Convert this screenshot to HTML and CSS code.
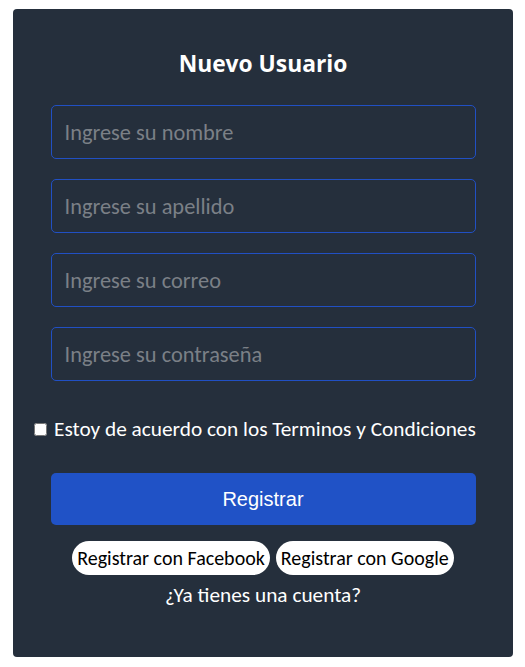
FILE: index.html
```html
<!DOCTYPE html>
<html lang="es">
<head>
<meta charset="utf-8">
<title>Nuevo Usuario</title>
<link rel="stylesheet" href="styles.css">
</head>
<body>
<form class="card">
  <h1 class="title">Nuevo Usuario</h1>
  <div class="fields">
    <input class="field" type="text" placeholder="Ingrese su nombre">
    <input class="field" type="text" placeholder="Ingrese su apellido">
    <input class="field" type="email" placeholder="Ingrese su correo">
    <input class="field" type="password" placeholder="Ingrese su contraseña">
  </div>
  <label class="terms"><input class="check" type="checkbox"><span>Estoy de acuerdo con los Terminos y Condiciones</span></label>
  <button class="submit" type="button">Registrar</button>
  <div class="social">
    <button class="pill" type="button">Registrar con Facebook</button>
    <button class="pill" type="button">Registrar con Google</button>
  </div>
  <p class="login">¿Ya tienes una cuenta?</p>
</form>
</body>
</html>
```
FILE: styles.css
```css
* { box-sizing: border-box; }
body {
  margin: 0;
  padding: 9px 12px 10px 13px;
  background: #ffffff;
  font-family: Carlito, "Open Sans", "Noto Sans", sans-serif;
}
.card {
  width: 500px;
  height: 648px;
  background: #252f3c;
  border-radius: 4px;
  display: flex;
  flex-direction: column;
  align-items: center;
  padding: 40px 0 0;
}
.title {
  margin: 0;
  color: #ffffff;
  font-family: "Open Sans", "Noto Sans", sans-serif;
  font-weight: 700;
  font-size: 22.8px;
  line-height: 30px;
}
.fields {
  margin-top: 26px;
  display: flex;
  flex-direction: column;
  gap: 20px;
}
.field {
  width: 425px;
  height: 54px;
  background: transparent;
  border: 1px solid #2150c4;
  border-radius: 5px;
  padding: 0 13px;
  font-family: inherit;
  font-size: 22.4px;
  color: #ffffff;
  outline: none;
}
.field::placeholder { color: #7b8087; }
.terms {
  align-self: flex-start;
  margin: 36px 0 0 21px;
  display: flex;
  align-items: center;
  gap: 7px;
  color: #ffffff;
  font-size: 21.3px;
  line-height: 24px;
}
.check {
  margin: 0;
  width: 13px;
  height: 13px;
}
.submit {
  margin-top: 32px;
  width: 425px;
  height: 52px;
  border: none;
  border-radius: 5px;
  background: #2052c6;
  color: #ffffff;
  font-family: "Liberation Sans", Arial, sans-serif;
  font-size: 20px;
}
.social {
  margin-top: 16px;
  display: flex;
  gap: 6px;
}
.pill {
  height: 34px;
  padding: 0 5px;
  border: none;
  border-radius: 17px;
  background: #ffffff;
  color: #000000;
  font-family: inherit;
  font-size: 20px;
}
.login {
  margin: 8px 0 0;
  color: #ffffff;
  font-size: 21.3px;
  line-height: 24px;
}
```
